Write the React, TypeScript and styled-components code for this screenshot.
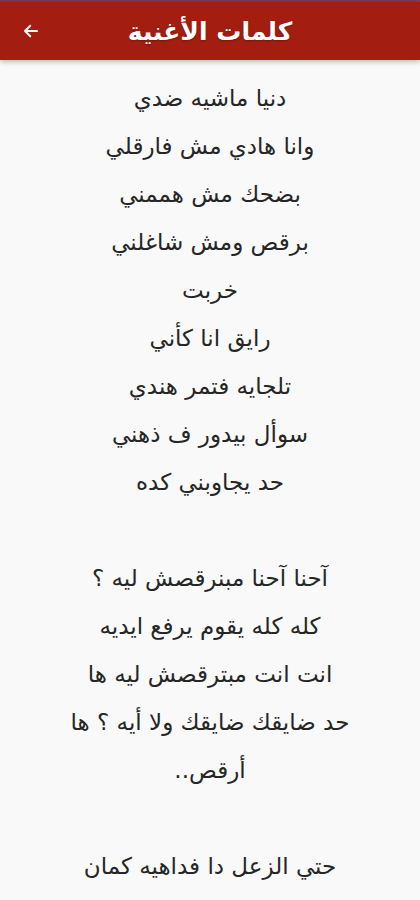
import { FC } from "react";
import styled, { createGlobalStyle } from "styled-components";

const GlobalStyle = createGlobalStyle`
  html, body {
    margin: 0;
    padding: 0;
    background: #f9f9f9;
  }
  body {
    font-family: "DejaVu Sans", "Noto Sans", sans-serif;
  }
`;

const Page = styled.div`
  width: 420px;
  min-height: 900px;
  background: #f9f9f9;
  overflow: hidden;
`;

const StatusStrip = styled.div`
  height: 2px;
  background: #7b3a5c;
`;

const Header = styled.header`
  position: relative;
  height: 58px;
  background: #a31d10;
  display: flex;
  align-items: center;
  justify-content: center;
  box-shadow: 0 2px 5px rgba(0, 0, 0, 0.25);
`;

const Title = styled.h1`
  margin: 0;
  color: #fff;
  font-size: 25px;
  font-weight: bold;
  direction: rtl;
  text-shadow: 0 1px 2px rgba(0, 0, 0, 0.25);
`;

const BackButton = styled.button`
  position: absolute;
  left: 20px;
  top: 50%;
  transform: translateY(-50%);
  background: none;
  border: 0;
  padding: 2px;
  display: flex;
  cursor: pointer;
`;

const Lyrics = styled.div`
  direction: rtl;
  text-align: center;
  padding-top: 14px;
`;

const Line = styled.p`
  margin: 0;
  height: 48px;
  line-height: 48px;
  font-size: 23px;
  color: #262626;
  white-space: nowrap;
`;

const lines = [
  "دنيا ماشيه ضدي",
  "وانا هادي مش فارقلي",
  "بضحك مش هممني",
  "برقص ومش شاغلني",
  "خربت",
  "رايق انا كأني",
  "تلجايه فتمر هندي",
  "سوأل بيدور ف ذهني",
  "حد يجاوبني كده",
  "",
  "آحنا آحنا مبنرقصش ليه ؟",
  "كله كله يقوم يرفع ايديه",
  "انت انت مبترقصش ليه ها",
  "حد ضايقك ضايقك ولا أيه ؟ ها",
  "أرقص..",
  "",
  "حتي الزعل دا فداهيه كمان",
];

const App: FC = () => {
  return (
    <>
      <GlobalStyle />
      <Page>
        <StatusStrip />
        <Header>
          <BackButton aria-label="back">
            <svg width="18" height="18" viewBox="0 0 24 24" fill="none" stroke="#fff" strokeWidth="2.6" strokeLinecap="round" strokeLinejoin="round">
              <path d="M20 12H5" />
              <path d="M11 5l-7 7 7 7" />
            </svg>
          </BackButton>
          <Title>كلمات الأغنية</Title>
        </Header>
        <Lyrics>
          {lines.map((l, i) => (
            <Line key={i}>{l}</Line>
          ))}
        </Lyrics>
      </Page>
    </>
  );
};

export default App;
